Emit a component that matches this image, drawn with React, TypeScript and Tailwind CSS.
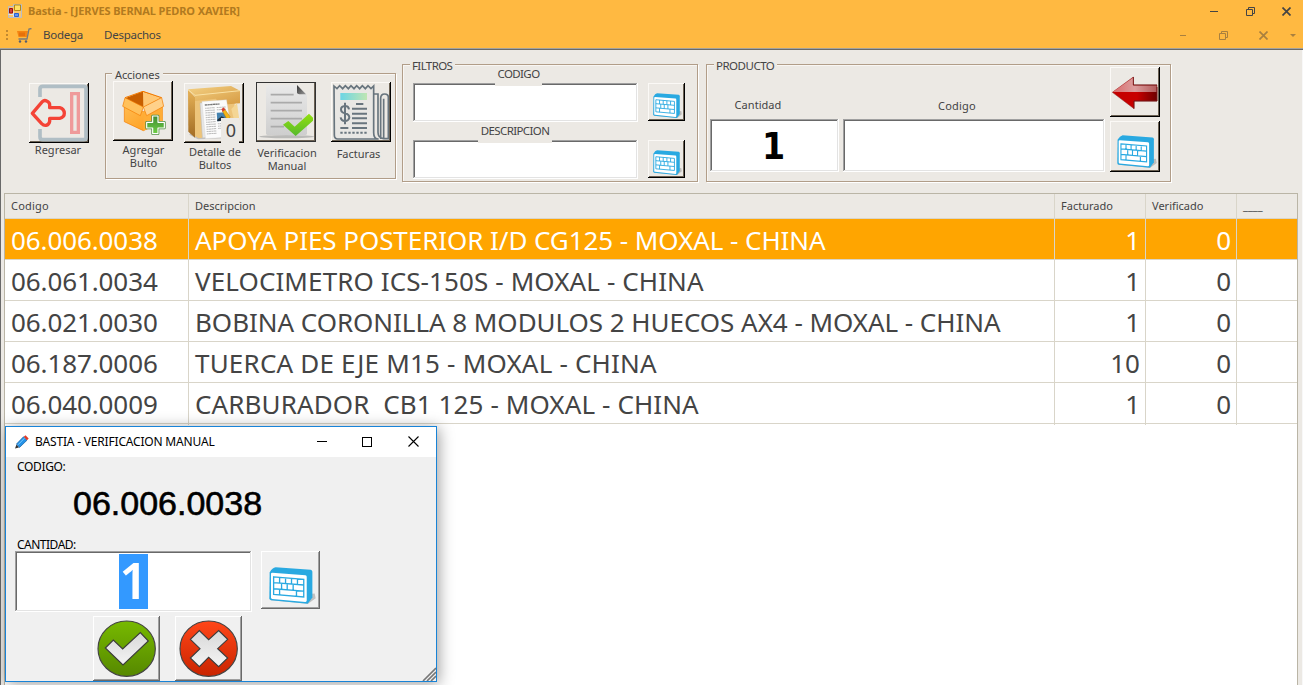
import React, { ReactNode } from "react";

const rows = [
  { code: "06.006.0038", desc: "APOYA PIES POSTERIOR I/D CG125 - MOXAL - CHINA", billed: 1, verified: 0, selected: true, spacing: "tracking-[-0.065px]" },
  { code: "06.061.0034", desc: "VELOCIMETRO ICS-150S - MOXAL - CHINA", billed: 1, verified: 0, spacing: "tracking-[0.11px]" },
  { code: "06.021.0030", desc: "BOBINA CORONILLA 8 MODULOS 2 HUECOS AX4 - MOXAL - CHINA", billed: 1, verified: 0, spacing: "tracking-[-0.04px]" },
  { code: "06.187.0006", desc: "TUERCA DE EJE M15 - MOXAL - CHINA", billed: 10, verified: 0, spacing: "tracking-[0.2px]" },
  { code: "06.040.0009", desc: "CARBURADOR  CB1 125 - MOXAL - CHINA", billed: 1, verified: 0, spacing: "tracking-[0.11px]" },
];

const raised =
  "shrink-0 shadow-[inset_-1px_-1px_0_#000,inset_1px_1px_0_#fbf9f6,inset_-2px_-2px_0_#6b6153]";
const raisedGray =
  "shrink-0 shadow-[inset_-1px_-1px_0_#696969,inset_1px_1px_0_#fff,inset_-2px_-2px_0_#a0a0a0]";
const sunken =
  "shrink-0 bg-white shadow-[inset_-1px_-1px_0_#fff,inset_1px_1px_0_#a0a0a0,inset_-2px_-2px_0_#e3e3e3,inset_2px_2px_0_#696969]";

function Group({ title, className, legend, children }: { title: string; className: string; legend: string; children: ReactNode }) {
  return (
    <fieldset className={`relative shrink-0 border border-[#b19d88] shadow-[1px_1px_0_#fff,inset_1px_1px_0_#f8f6f3] ${className}`}>
      <span className={`absolute whitespace-nowrap bg-[#ece9e4] leading-[14px] ${legend}`}>{title}</span>
      {children}
    </fieldset>
  );
}

function Keyboard({ className }: { className: string }) {
  return (
    <svg className={className} viewBox="0 0 142 112" preserveAspectRatio="none">
      <path d="M6 98L118 108L141 92L138 78L6 90Z" fill="#777" opacity=".4" />
      <path d="M2 16Q10 3 20 1L126 8Q131 9 131 14V90L117 108L6 98Q1 97 1 92Z" fill="#29a9e1" />
      <path d="M6 20Q6 17 10 17L110 24Q114 24 114 29V99Q114 103 110 103L10 94Q6 94 6 90Z" fill="#fff" />
      <g transform="translate(14 29) skewY(4.5)" fill="none" stroke="#29a9e1" strokeWidth="4">
        <path d="M0 0H91V52H0ZM0 17H91M0 35H91M18 0V17M36 0V17M54 0V17M72 0V17M24 17V35M41 17V35M59 17V35M18 35V52M69 35V52" />
      </g>
    </svg>
  );
}

function ExitIcon() {
  return (
    <svg width="60" height="60" viewBox="0 0 180 180">
      <path d="M33 42V18Q33 10 41 10H164Q171 10 171 17V164Q171 170 164 170H41Q33 170 33 162V138" fill="none" stroke="#b0bec5" strokeWidth="11" />
      <path d="M128 32H148V148H128Z" fill="none" stroke="#ef9a9a" strokeWidth="10" />
      <path d="M10 91L40 56Q46 50 53 54Q62 58 62 65V74H92Q106 78 106 91Q106 103 92 106H62V115Q60 125 51 127Q44 128 38 122Z" fill="#ece9e4" stroke="#f44336" strokeWidth="10" strokeLinejoin="round" />
    </svg>
  );
}

function BoxIcon() {
  return (
    <svg width="60" height="60" viewBox="0 0 180 180">
      <defs>
        <linearGradient id="bx" x2="1" y2="1"><stop stopColor="#ffbd55" /><stop offset="1" stopColor="#ff9a14" /></linearGradient>
        <linearGradient id="pl" x2="0" y2="1"><stop stopColor="#3f8a35" /><stop offset="1" stopColor="#6fd044" /></linearGradient>
      </defs>
      <path d="M34 64V122L91 149L148 122V64L91 92Z" fill="url(#bx)" stroke="#f57c00" strokeWidth="2" />
      <path d="M91 92L148 68V122L91 149Z" fill="#ffad36" />
      <path d="M36 52L90 31L145 50L91 81Z" fill="#c85f00" />
      <path d="M90 32L145 50L91 79Z" fill="#ffc875" />
      <path d="M36 50L91 78L82 104L29 76Z" fill="#ffc15c" stroke="#f57c00" strokeWidth="2" strokeLinejoin="round" />
      <path d="M91 78L146 50L152 76L101 104Z" fill="#ffd18a" stroke="#f57c00" strokeWidth="2" strokeLinejoin="round" />
      <path d="M36 50L90 31L146 50" fill="none" stroke="#f57c00" strokeWidth="3" />
      <path d="M119 105H135V124H154V141H135V158H119V141H101V124H119Z" fill="#fff" stroke="#4d8a3e" strokeWidth="8" strokeLinejoin="round" />
      <path d="M119 105H135V124H154V141H135V158H119V141H101V124H119Z" fill="url(#pl)" stroke="#fff" strokeWidth="3.5" strokeLinejoin="round" />
    </svg>
  );
}

function FolderIcon() {
  return (
    <svg width="60" height="60" viewBox="0 0 180 180">
      <defs>
        <linearGradient id="fo" x2="1" y2="1"><stop stopColor="#f4d184" /><stop offset="1" stopColor="#d69b43" /></linearGradient>
        <linearGradient id="fs" x2="0" y2="1"><stop stopColor="#e7b257" /><stop offset="1" stopColor="#a26c25" /></linearGradient>
      </defs>
      <path d="M16 155L42 169L160 164L130 130L24 140Z" fill="#999" opacity=".5" />
      <path d="M12 20L33 42V164L13 146Z" fill="url(#fs)" />
      <path d="M33 42L152 30V150L45 166L33 160Z" fill="#edc47a" />
      <path d="M12 19L141 9L168 23V61L107 66L96 47L33 54V41Z" fill="url(#fo)" />
      <path d="M12 20L33 37L168 23" fill="none" stroke="#fae2a5" strokeWidth="3" />
      <g transform="translate(48 60) rotate(-4)">
        <path d="M0 0H78V105H0Z" fill="#e6e6e6" stroke="#bbb" strokeWidth="1.5" />
        <path d="M6 -4H80L90 108H9Z" fill="#fbfbfb" stroke="#d0d0d0" strokeWidth="1" />
        <path d="M14 7H58" stroke="#777" strokeWidth="4" strokeDasharray="7 1" />
        <path d="M14 17H43M14 24H43M14 31H43M14 38H43M14 45H43M14 52H43M14 59H43M14 66H43M14 73H43M14 80H43M14 87H43M14 94H43M49 66H76M49 73H76M49 80H76M49 17H76M49 24H76" stroke="#bcbcbc" strokeWidth="3" strokeDasharray="5 1 8 1" />
        <path d="M48 33H78V58H48Z" fill="#4583b0" /><path d="M48 54L62 44L78 54V58H48Z" fill="#222f3b" />
      </g>
      <path d="M115 84L122 78L138 101L135 111L127 106Z" fill="#f5b517" stroke="#a67417" strokeWidth="1.5" />
      <path d="M112 79L119 73L124 80L116 86Z" fill="#d5412f" />
      <path d="M142 78L159 60L166 110H150Z" fill="#f4d695" />
    </svg>
  );
}

function CheckDocIcon() {
  return (
    <svg width="60" height="60" viewBox="0 0 180 180">
      <defs>
        <linearGradient id="dc" x2="0" y2="1"><stop stopColor="#e9e9e9" /><stop offset="1" stopColor="#cecece" /></linearGradient>
        <linearGradient id="ck" x2="0" y2="1"><stop stopColor="#93e00e" /><stop offset="1" stopColor="#56b92d" /></linearGradient>
        <linearGradient id="fl" x2="1" y2="1"><stop stopColor="#333" /><stop offset="1" stopColor="#999" /></linearGradient>
      </defs>
      <ellipse cx="92" cy="164" rx="82" ry="5" fill="#aaa" opacity=".75" />
      <path d="M30 16Q30 9 37 9H123L153 39V154Q153 160 146 160H37Q30 160 30 154Z" fill="url(#dc)" />
      <path d="M123 9L150 37H130Q123 37 123 31Z" fill="url(#fl)" />
      <path d="M44 38H113M44 62H138M44 86H138M44 110H138M44 134H84" stroke="#aaa" strokeWidth="5" />
      <path d="M81 128L97 117L116 134L159 95L171 107V116L119 162Z" fill="url(#ck)" />
    </svg>
  );
}

function InvoiceIcon() {
  return (
    <svg width="60" height="60" viewBox="0 0 180 180">
      <defs><linearGradient id="in"><stop stopColor="#6cd5e5" /><stop offset="1" stopColor="#bfe6b3" /></linearGradient></defs>
      <path d="M9 12L18 20L26 11L35 20L43 11L52 20L60 11L69 20L77 11L86 20L94 11L103 20L111 11L120 20L128 12V152Q128 171 143 171H20Q10 171 10 159Z" fill="#e8e7e4" stroke="#68757e" strokeWidth="5" />
      <path d="M128 36H141V151Q141 169 158 170H172V46Q172 36 161 36Q149 36 149 49V171M158 170V50" fill="none" stroke="#68757e" strokeWidth="5" />
      <path d="M28 33H108V54H28Z" fill="url(#in)" />
      <path d="M75 66H97M63 80H108M63 95H108M63 109H108M63 124H108M28 138H52M63 138H108" stroke="#68757e" strokeWidth="6" />
      <path d="M28 152H108" stroke="#68757e" strokeWidth="6" strokeDasharray="7 5" />
      <path d="M54 82Q53 72 42 72Q30 73 30 82Q30 92 42 94Q55 97 55 107Q53 117 42 117Q30 116 29 106M42 62V127" fill="none" stroke="#68757e" strokeWidth="6" />
    </svg>
  );
}

function RedArrow() {
  return (
    <svg width="50" height="50" viewBox="0 0 150 150">
      <defs>
        <linearGradient id="ra"><stop stopColor="#c40000" /><stop offset=".55" stopColor="#c80000" /><stop offset="1" stopColor="#6c0000" /></linearGradient>
        <linearGradient id="rg"><stop stopColor="#d96a6a" /><stop offset=".5" stopColor="#dc9d9d" /><stop offset="1" stopColor="#b35c5c" /></linearGradient>
      </defs>
      <path d="M7 76L70 30V54H141V102H72V125Z" fill="url(#ra)" stroke="#8a3030" strokeWidth="1.5" />
      <path d="M8 75L69 32V55H140V75Z" fill="url(#rg)" />
      <path d="M70 30V54H141M141 60V102H72V125" fill="none" stroke="#6d0b0b" strokeWidth="2.5" />
    </svg>
  );
}

function ToolButton({ icon, className, label, labelClass, overlay }: { icon: ReactNode; className: string; label: ReactNode; labelClass: string; overlay?: ReactNode }) {
  return (
    <div className={`flex w-[60px] shrink-0 flex-col items-center ${className}`}>
      <button className={`relative size-[60px] ${raised}`}>{icon}{overlay}</button>
      <div className={`whitespace-nowrap text-center text-[11px] leading-[13px] ${labelClass}`}>{label}</div>
    </div>
  );
}

function Filter({ label, className, width }: { label: string; className: string; width: string }) {
  return (
    <div className={`flex ${className}`}>
      <div className={`relative h-[39px] w-[225px] ${sunken}`}>
        <span className={`absolute -top-4 h-[19px] bg-[#ece9e4] text-center leading-[14px] ${width}`}>{label}</span>
      </div>
      <button className={`ml-[10px] flex h-[38px] w-[37px] justify-end pt-[10px] pr-[3px] ${raised}`}>
        <Keyboard className="h-[26px] w-[29px]" />
      </button>
    </div>
  );
}

function Restore() {
  return (
    <svg width="9" height="9" viewBox="0 0 9 9" fill="none" stroke="currentColor"><path d="M.5 2.5H6.5V8.5H.5ZM2.5 2.5V.5H8.5V6.5H6.5" /></svg>
  );
}
function Close() {
  return (
    <svg width="9" height="9" viewBox="0 0 9 9" stroke="currentColor" strokeWidth="1.7"><path d="M.5 .5L8.5 8.5M8.5 .5L.5 8.5" /></svg>
  );
}

function Header() {
  return (
    <header className="h-[50px] border-b border-[#696969] bg-[#ffb941]">
      <div className="flex h-[22px] items-center pl-2 text-[#b17a1f]">
        <svg width="14" height="14" viewBox="0 0 14 14">
          <path d="M.5 2.5H5.5V.5H13.5V13.5H.5Z" fill="#fac56c" stroke="#b8bcc5" />
          <path d="M6.5 1H12.5V6.5H6.5Z" fill="#ffdf63" stroke="#b58912" />
          <path d="M1.5 4.5H4.5V9H1.5Z" fill="#d43c34" stroke="#9b1010" />
          <path d="M6.5 9.5H10.5V12.5H6.5Z" fill="#5d94f4" stroke="#2a60d1" />
          <path d="M5.5 7.5V13M.5 10.5H5.5" stroke="#dbe2ec" />
        </svg>
        <span className="ml-[6px] text-[11px] font-bold tracking-[-0.12px]">Bastia - [JERVES BERNAL PEDRO XAVIER]</span>
        <div className="ml-auto flex items-center pr-[12px] text-[#444]">
          <i className="h-px w-2 bg-[#444]" /><span className="ml-[28px]"><Restore /></span><span className="ml-[27px]"><Close /></span>
        </div>
      </div>
      <div className="flex h-[26px] items-center pl-[6px] text-[11.5px] text-[#444]">
        <svg width="3" height="11" viewBox="0 0 3 11" fill="#c18931"><path d="M0 0H2V2H0ZM0 4H2V6H0ZM0 8H2V10H0Z" /></svg>
        <svg className="ml-2" width="15" height="15" viewBox="0 0 15 15">
          <path d="M0 3H11L9.8 9H1.5Z" fill="#f58410" /><path d="M3 4.5V8M5 4.5V8M7 4.5V8" stroke="#d65f05" />
          <path d="M14.5 .5L12 1L10 11H1.5" fill="none" stroke="#77797a" strokeWidth="1.3" />
          <circle cx="3" cy="13.5" r="1.2" fill="#555e70" /><circle cx="9" cy="13.5" r="1.2" fill="#555e70" />
        </svg>
        <span className="ml-[11px] w-[61px] tracking-[-0.25px]">Bodega</span><span className="tracking-[-0.25px]">Despachos</span>
        <div className="ml-auto flex items-center pr-[7px] text-[#a9803f]">
          <i className="h-px w-[6px] bg-[#a9803f]" /><span className="ml-[33px]"><Restore /></span><span className="ml-[31px]"><Close /></span>
          <svg className="ml-[22px]" width="6" height="3" viewBox="0 0 6 3" fill="#a9803f"><path d="M0 0H6L3 3Z" /></svg>
        </div>
      </div>
      <div className="h-px bg-[#a5a29b]" />
    </header>
  );
}

function Toolbar() {
  return (
    <div className="flex h-[143px] shrink-0 items-start pl-7">
      <ToolButton icon={<ExitIcon />} className="mt-[33px]" label="Regresar" labelClass="mr-[2px]" />
      <Group title="Acciones" legend="left-[6px] -top-[6px] px-[3px] text-[11px] tracking-[-0.1px]" className="mt-[23px] ml-4 flex h-[106px] w-[291px] items-start pl-[7px]">
        <ToolButton icon={<BoxIcon />} className="mt-[7px]" label={<>Agregar<br />Bulto</>} labelClass="mt-[2px] ml-px" />
        <ToolButton icon={<FolderIcon />} className="ml-[11px] mt-[9px]" label={<>Detalle de<br />Bultos</>} labelClass="mt-[2px] ml-[2px]"
          overlay={<span className="absolute top-[35px] left-[37px] h-[25px] w-[18px] bg-[#ece9e4] pl-[2px] text-center text-[18px] leading-[24px]">0</span>} />
        <ToolButton icon={<CheckDocIcon />} className="ml-[12px] mt-2" label={<>Verificacion<br />Manual</>} labelClass="mt-[4px] ml-[2px]"
          overlay={<span className="absolute inset-0 border border-[#333]" />} />
        <ToolButton icon={<InvoiceIcon />} className="ml-[15px] mt-2" label="Facturas" labelClass="mt-[5px] mr-[5px]" />
      </Group>
      <Group title="FILTROS" legend="left-[7px] -top-[6px] px-[2px] pr-[3px] text-[11.5px] tracking-[-0.6px]" className="mt-[14px] ml-[6px] h-[118px] w-[296px] pl-[10px] text-[11.5px] tracking-[-0.6px]">
        <Filter label="CODIGO" className="mt-[18px]" width="left-[82px] w-[47px]" />
        <Filter label="DESCRIPCION" className="mt-[18px]" width="left-[65px] w-[74px]" />
      </Group>
      <Group title="PRODUCTO" legend="left-[7px] -top-[6px] px-[2px] pr-[3px] text-[11.5px] tracking-[-0.5px]" className="mt-[14px] ml-[8px] flex h-[118px] w-[465px] items-start pl-[3px] text-[11px]">
        <div className="mt-[32px] w-[129px]">
          <div className="mr-[33px] h-[22px] text-center leading-4 tracking-[0.05px]">Cantidad</div>
          <div className={`h-[53px] pr-[2px] text-center font-['DejaVu_Sans_Condensed','DejaVu_Sans',sans-serif] text-[37px] leading-[55px] font-bold text-black ${sunken}`}>1</div>
        </div>
        <div className="mt-[32px] ml-1 w-[262px]">
          <div className="h-[22px] pl-[95px] leading-[18px] tracking-[0.2px]">Codigo</div>
          <div className={`h-[53px] ${sunken}`} />
        </div>
        <div className="mt-[2px] ml-[5px] flex flex-col gap-1">
          <button className={`size-[50px] ${raised}`}><RedArrow /></button>
          <button className={`flex h-[51px] w-[50px] pt-[14px] pl-[7px] ${raised}`}><Keyboard className="h-[34px] w-[40px]" /></button>
        </div>
      </Group>
    </div>
  );
}

const cols = "grid grid-cols-[184px_866px_91px_91px_61px]";

function Table() {
  return (
    <div className="ml-[3px] flex w-[1294px] grow flex-col border border-b-0 border-[#bab5a6] bg-white">
      <div className={`${cols} h-[25px] border-b border-[#d9d5c9] bg-[#ece9e4] text-[11px] leading-[24px]`}>
        <div className="border-r border-[#d9d5c9] pl-[6px] tracking-[0.2px]">Codigo</div>
        <div className="border-r border-[#d9d5c9] pl-[6px]">Descripcion</div>
        <div className="border-r border-[#d9d5c9] pl-[6px]">Facturado</div>
        <div className="border-r border-[#d9d5c9] pl-[6px]">Verificado</div>
        <div className="pl-[6px]">____</div>
      </div>
      {rows.map((r) => (
        <div key={r.code} className={`${cols} h-[41px] border-b border-[#d9d5c9] text-[26px] leading-[42px] ${r.selected ? "bg-[#ffa500] text-white" : ""}`}>
          <div className="border-r border-[#d9d5c9] pl-[6px] tracking-[-0.1px]">{r.code}</div>
          <div className={`border-r border-[#d9d5c9] pl-[6px] whitespace-pre ${r.spacing}`}>{r.desc}</div>
          <div className="border-r border-[#d9d5c9] pr-[5px] text-right">{r.billed}</div>
          <div className="border-r border-[#d9d5c9] pr-[5px] text-right">{r.verified}</div>
          <div />
        </div>
      ))}
    </div>
  );
}

function ResultIcon({ ok }: { ok?: boolean }) {
  return (
    <svg width="67" height="65" viewBox="0 0 201 195">
      <defs>
        <linearGradient id="gr" x2="0" y2="1"><stop stopColor="#77b900" /><stop offset="1" stopColor="#568800" /></linearGradient>
        <linearGradient id="rd" x2="0" y2="1"><stop stopColor="#ff4618" /><stop offset="1" stopColor="#c92400" /></linearGradient>
        <linearGradient id="wh" x2="0" y2="1"><stop stopColor="#d8d8d8" /><stop offset="1" stopColor="#f4f4f4" /></linearGradient>
      </defs>
      <ellipse cx="101" cy="98" rx="86" ry="83" fill={ok ? "url(#gr)" : "url(#rd)"} stroke="#444" strokeWidth="3.5" />
      <path d={ok ? "M37 96L61 72L89 99L142 50L166 75L90 147Z" : "M46 70L73 44L101 71L131 44L158 70L128 98L158 126L131 152L101 124L73 152L46 126L75 98Z"} fill="url(#wh)" stroke="#3c3c3c" strokeWidth="3.5" />
    </svg>
  );
}

function Dialog() {
  return (
    <section className="absolute top-[426px] left-[5px] flex h-[256px] w-[432px] flex-col border border-[#1883d7] bg-[#f0f0f0] text-[12px] text-black shadow-[2px_2px_14px_rgba(0,0,0,0.38)]">
      <div className="flex h-[30px] items-center bg-white pl-[9px]">
        <svg width="14" height="14" viewBox="0 0 14 14">
          <path d="M0 13.5L1.5 9.5L4 12.5Z" fill="#333" /><path d="M1.5 9L8.5 1.8L12 5.2L4.5 12.5Z" fill="#2492e8" stroke="#145d9d" strokeWidth=".7" />
          <path d="M8.8 1.8L10.5 .3L13.7 3.5L12 5.2Z" fill="#df3b28" /><path d="M3 9.8L9.5 3.2" stroke="#7acbff" />
        </svg>
        <span className="ml-[6px] tracking-[-0.19px] whitespace-nowrap">BASTIA - VERIFICACION MANUAL</span>
        <div className="ml-auto flex items-center pr-[17px] pb-px">
          <i className="h-px w-[10px] bg-black" /><i className="ml-[35px] size-[10px] border border-black" />
          <svg className="ml-[36px]" width="11" height="11" viewBox="0 0 11 11" stroke="#000" strokeWidth="1.1"><path d="M.5 .5L10.5 10.5M10.5 .5L.5 10.5" /></svg>
        </div>
      </div>
      <div className="pl-[11px] leading-5 tracking-[-0.35px]">CODIGO:</div>
      <div className="h-[58px] pl-[67px] font-['Liberation_Sans',sans-serif] text-[34px] leading-[52px] [-webkit-text-stroke:0.6px_black]">06.006.0038</div>
      <div className="h-[16px] pl-[11px] leading-[20px] tracking-[-0.5px]">CANTIDAD:</div>
      <div className="flex h-[65px] pl-[9px]">
        <div className={`h-[61px] w-[237px] pt-[3px] text-center text-[50px] leading-[53px] font-semibold ${sunken}`}>
          <span className="inline-block h-[55px] w-[29px] bg-[#3399ff] text-white">1</span>
        </div>
        <button className={`ml-[9px] flex h-[58px] w-[59px] pt-[16px] pl-[8px] ${raisedGray}`}><Keyboard className="h-[38px] w-[47px]" /></button>
      </div>
      <div className="flex gap-[15px] pl-[87px]">
        <button className={raisedGray}><ResultIcon ok /></button>
        <button className={raisedGray}><ResultIcon /></button>
      </div>
      <svg className="absolute right-0 bottom-0" width="14" height="14" viewBox="0 0 14 14" stroke="#777"><path d="M1 14L14 1M5 14L14 5M9 14L14 9" strokeWidth="1.6" /></svg>
    </section>
  );
}

export default function App() {
  return (
    <div className="relative flex h-[685px] w-[1303px] flex-col overflow-hidden bg-[#ece9e4] font-['Noto_Sans',sans-serif] text-[#444]">
      <Header />
      <main className="flex grow flex-col border-r border-l border-l-[#696969] border-r-[#f8f8f8]">
        <Toolbar />
        <Table />
      </main>
      <Dialog />
    </div>
  );
}
